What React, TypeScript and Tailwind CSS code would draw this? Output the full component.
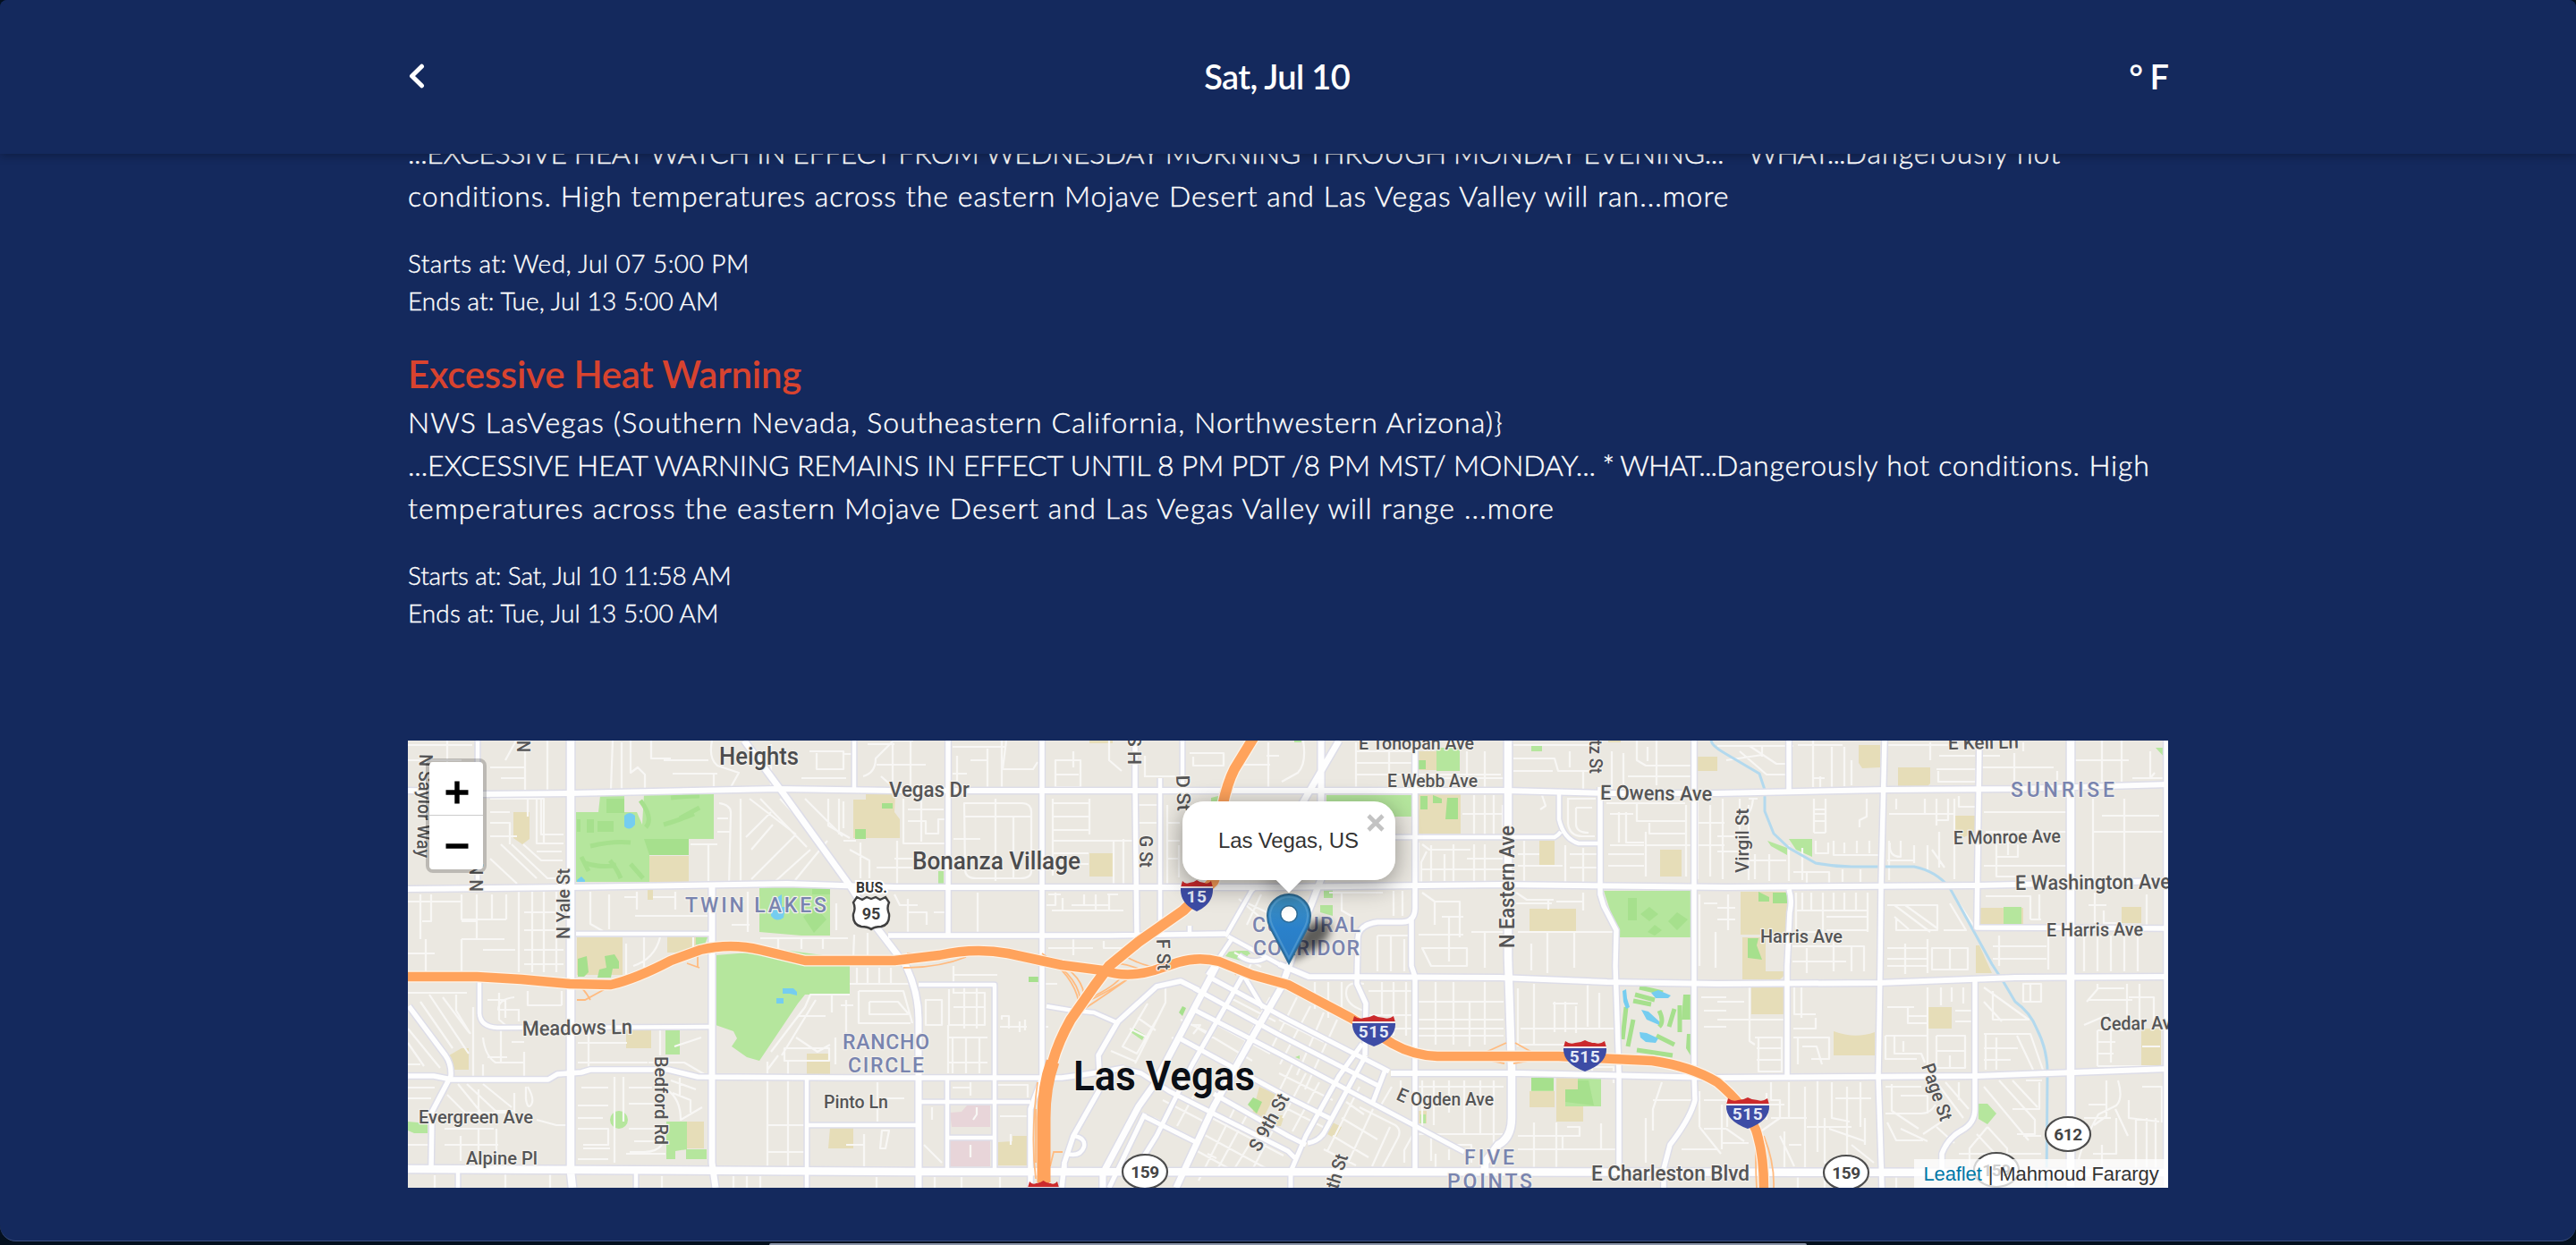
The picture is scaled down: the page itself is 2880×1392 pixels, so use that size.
import React from "react";

const TAN = [
  "M574 908h18v30l-8 6-10-7z",
  "M726 957h44v29h-44z",
  "M724 994h6v12h-6z",
  "M645 1048h51v42h-51z",
  "M746 1047h44l-4 18h-40z",
  "M700 1152h28v20h-28z",
  "M502 1180l14-8h8v24h-18z",
  "M902 1178h26v23h-26z",
  "M768 1254h19v30h-19z",
  "M928 1261h26v23h-28z",
  "M954 894h14v-6h33l-1 20 6 8v21h-52z",
  "M1218 954h26v26h-26z",
  "M1218 828h26v3h-26z",
  "M1116 1277l16-1v-6h16v33h-32z",
  "M1408 1215l18 8-14 28-12-6z",
  "M1428 1247h8l-4 12h-8z",
  "M1586 840h20v21h-20z",
  "M1586 888h47v44h-47z",
  "M1721 940h17v28h-17z",
  "M1710 1016h52v26h-52z",
  "M1856 950h24v30h-24z",
  "M1798 828h14v2h-14z",
  "M1898 846h22v16h-22z",
  "M1710 1220h28v18h-28z",
  "M1740 1205h30v49h-30z",
  "M1585 1242h10v14h-10z",
  "M1490 1255l10 5-7 13-9-5z",
  "M2078 833h24v25l-20 1-4-6z",
  "M2122 858h36v18l-4 4h-32z",
  "M2186 912h22v18l-12 6-10-6z",
  "M1946 997h52v48h-52z",
  "M1948 1048h26v38h26l-10 9h-42z",
  "M1958 1104h36v30h-36z",
  "M2050 1153q24 9 46 1v26h-46z",
  "M2156 1126h26v24h-26z",
  "M2214 1015h48v23h-48z",
  "M2372 1014h22v18h-22z",
  "M2209 1057l4 0 14 31h-18z",
  "M2394 1150h22v41h-22z",
];

const GREEN = [
  "M644 908h25l2-18h27v18l14 0 6 14 2-34h78v50h-28v18h-44v30h-82z",
  "M778 1048h13l-3 8h-10z",
  "M849 992h79v54h-32l-47-4z",
  "M800 1068l75-6 75 10v40h-50l-8 10-43 64-14-4-17-12 6-9-4-8-20-7z",
  "M744 1152h16v27h-16z",
  "M745 1254h23v31l-13 2v9h-10z",
  "M767 1285h23v11h-23z",
  "M456 1254l22 2v11h-15l-7-3z",
  "M1049 974h6v14h-6z",
  "M1354 892l8-2v10h-8z",
  "M1384 1063h12l2 4h-2l-6 8-20-6 4-5z",
  "M1483 889h95v24h-95z",
  "M1606 836h26v26h-26z",
  "M1712 832h12v8h-12z",
  "M1447 828h8v2h-8z",
  "M1480 994h10v10h-10z",
  "M1476 1012h14v12l-14-4z",
  "M1793 996h97v52h-80z",
  "M1264 1154l4-4 12 7-3 6z",
  "M1712 1205h25v15h-25z",
  "M1764 1205h26v32h-40v-18h14z",
  "M1976 940l22 8v8l-18-10z",
  "M2000 938h26v20l-18-8z",
  "M2410 836h11v12z",
  "M2240 1014h20v23h-20z",
  "M2212 1234h10l10 11-10 12-10-6z",
  "M1588 1246h6v10h-6z",
  "M1448 1182l5-2v4z",
  "M682 1252a10 10 0 1 0 20 0a10 10 0 1 0-20 0z",
];

const DARK_GREEN = [
  "M678 893h20v16h-20z",
  "M668 918h18v12h-18z",
  "M656 916h8v15h-8z",
  "M645 916h4v14h-4z",
  "M720 938h50v18h-44z",
  "M898 1025l14-11 12 14-14 15z",
  "M908 994h20v6h-20z",
  "M646 1072l10-3 2 18-5 5h-7z",
  "M676 1069l11-2 5 8v8h-7l-2 10h-15l2-9 8-2z",
  "M986 898h12v6h-12z",
  "M956 927h12v11h-12z",
  "M1150 1092h11v6h-11z",
  "M1318 1132l4-7 4 2-4 9z",
  "M1395 1235l6-8 10 5-6 13z",
  "M1586 850h8v10h-8z",
  "M1588 890h8v15h-8z",
  "M1602 889l10 4v5h-10z",
  "M1618 892h12v24h-14z",
  "M1820 1004h10v25h-10z",
  "M1844 1014l10 8-10 8-10-8z",
  "M1875 1020l12 8-12 12-10-10z",
  "M1850 1034l8 6-8 6-8-4z",
  "M1712 1205h25v14h-25z",
  "M1764 1208l12 0 6 28-32-4 0-14h14z",
  "M1966 997l12 6v5h-12z",
  "M1982 998h16v12h-16z",
  "M1954 1049h12l-2 8 6 16-16-2z",
  "M1882 1112h8v28h-10z",
  "M1886 1156h4v24l-5-8z",
];

const STROKED_GREEN =
  "M660 946q25-6 45-4M654 965q20 6 35 2M716 895q15 20 6 30M742 922q20-6 34-12M760 915l22-12M750 892q20-2 32-2M650 958q4 8 8 16M682 962q8 10 12 20M705 966l14 16M1833 1104l26 6M1828 1112l22 6M1826 1119l20 4M1818 1126l-4 36M1826 1140l-6 30M1855 1130q6 12 0 18M1872 1128l-6 20M1878 1124l0 30M1830 1174l40 6M1852 1158l20 10";

const WATER = [
  "M698 912q6-6 12 0v10q-6 8-12 2z",
  "M645 984l5-4 4 4v2h-9z",
  "M868 1004l6-4v14h4l-2 12q-8 6-14-2v-6l8-4z",
  "M875 1105h12l4 4v4l-8-2h-8z",
  "M868 1116h8v6h-8z",
  "M1814 1108l4-2 1 10 3 10-4 2-3-8z",
  "M1846 1110l8-3 14 6-3 3h-14z",
  "M1835 1129l8 2 12 11v4l-14-6z",
  "M1833 1154l8 1 13 6-3 5-11-1-6-5z",
];

const PINK = [
  "M1062 1244l13-1 6-7h26v24h-43z",
  "M1062 1275h45v29h-46z",
];

const MINOR = [
  // northwest
  "M456 833h72M456 850h60M500 828v55M548 858h40M565 850l12-22M587 828v55M612 828v55M560 870h28M685 828l-2 54M695 830v52M705 828v36l8-6 8 8v16M742 850h50M796 828q-4 20 6 28l24 8-10 18M728 828v20h22M752 865h50M798 865v16M862 832v48M905 840h38v20h-30v-18M896 870h50",
  "M548 893h60v50h22M590 893v20M600 893v50h30M605 893v40h25M548 908h22M548 920h22v24M560 944l40 38M572 944l40 38h14M585 944l20 18h24M548 960l30 28M600 952h28M548 935h30",
  "M804 898q14 2 13 12l-2 80M802 944h-30M792 944v44M802 915h12M802 930h14M828 893v94M838 893l52 40M850 893l52 54M872 893l34 36M890 933l-50 50M906 950l-40 36M925 940l-36 44M862 908l-28 28M926 893v30l24 14M840 950l24-28M938 893v40M900 893l42 42",
  "M660 997v36l14 8M681 1000v39M712 997v20M698 1003h14M755 997v20M730 1003h24M710 1024h84M836 997v45M820 1008h12M818 1034h20M700 1055v36M720 1048v42M738 1048q-6 24-30 32M775 1048v14M850 1049h98M870 1049v12M896 1049v12M920 1049v12M935 1010v30",
  "M456 1008h60M470 1000v50M482 1000v30h-10M516 1000v28h50M533 1000v50M550 1000v28M566 1000v28M580 997v90M595 997v90M608 997v90M622 997v90M586 1020h44M586 1040h44M586 1062h44M586 1078h44M516 1030h18M516 1050h48M476 1050v38M516 1050v38M456 1066h30M540 1062h36",
  // west of the river bend
  "M456 1110h66M480 1112l44 66M470 1120l36 52M495 1115l30 40M510 1112v18l16 26M529 1126v78M456 1150l36 44M456 1166l18 26M470 1190h-14M545 1118h20v20M558 1110v30l14 12M575 1115q-18 2-18 14h24M580 1130v12M540 1160q2 20 14 28h18M560 1152v36M572 1165h14M545 1182h22M586 1176v30M560 1188h26M540 1190v14M590 1108v16h38M628 1108v16",
  "M456 1216h30M456 1228h26M512 1212l26 32M522 1212l32 30h22M540 1212l32 26M500 1224l20 20h50M535 1218v34M575 1222v22M590 1215q8 14 4 20t-6-6v-14M497 1262h55M497 1280h60M535 1262v36M555 1262v30M515 1270v28M456 1280h24M600 1252l22 6h12M486 1314v14M565 1312v16M615 1312v16",
  "M658 1152v48M646 1166h55M646 1188h78M738 1152v28M725 1188h40l24 14M687 1204v96M697 1204v50M650 1216h30M646 1236h34M646 1250h28M646 1262h34v18h-28M652 1284h30M646 1296h34M703 1216h26M703 1234h28M703 1262h36v14h-30M740 1280q-6 8-20 8h-16M750 1208l28 10M752 1222l20 8v14M760 1205v20M745 1218q16 10 16 34l24-14M784 1160l-30 10M700 1290h44M820 1315v13M835 1315v13M850 1315v13M740 1315v13",
  "M950 1112h-44l-6 14-38 50M912 1118l-38 62M930 1112v20M893 1136h30M877 1172h50v14h-50zM858 1187v120M881 1187v120M858 1258h46M858 1288h44M890 1160l24 16 14-8M934 1160v30M870 1180l-12 16v50",
  // mid-north
  "M943 843h12M965 868q14-4 14-20l20-20h22M980 855h55M970 832h30M998 832v48M1018 828v50M985 868l16 14M1065 835h60M1070 845v36h34v-44M1085 850h18M1120 828v52M1065 865h16M1125 828l-4 32 34 0 5-8M1180 850h28v30h-28zM1180 866h26M1240 828v22l14 12M1200 840v18M1330 842h38v14h-34v-10M1418 830v52M1420 855h-40M1430 845h-14M1280 868h34M1280 845v24",
  "M1010 893v50h48M1030 893v48M1015 905h40M1015 918h20v14h14v-16h10M943 940h14M950 950l22 12v20M962 942v40M1003 940v52M1000 960h52M980 970h40M943 896v30M1078 898h64q12 0 11 12v64q0 8-12 8h-50q-12 0-12-10zM1078 913h74M1113 893v92M1066 938h30M1133 913v70M1177 893v86M1218 893v40M1177 898h40M1177 913h40M1177 928h40M1177 940h92M1177 954h40M1177 966h40M1245 940v50M1256 938v54M1273 900h22M1273 920h20M1305 900v90M1318 945v36M1305 920h14M1305 940h14M1305 960h14",
  "M955 1045l-1 26M970 1043v26M1015 1005v40h40M1016 1020h20v14M1000 1000l6 12h20M1093 998v44M1060 1020h-16M1180 998v14h-10M1188 1004v14M1176 1018h80M1212 1000v12h-14M1225 1000v18M1240 1000v18M1212 1012h28M1250 1000h-12M1172 1060h50M1200 1050v18M1234 1052v8h34M1172 1000h14",
  "M958 1082v18M970 1082v18M983 1082v18M996 1082v18M950 1100h66M960 1108v36h58M960 1108h50l10 36M972 1120h32l12 14M972 1120v14h44M940 1124h14M946 1118v36M1035 1118h18v28h-18zM1066 1080v30M1065 1090h50M1065 1110h36v36h-40v-40M1078 1104v46M1092 1104v46M1066 1126h36M1060 1146v54M1060 1160h44M1065 1160v40M1080 1160v40M1095 1160v40M1060 1188h44M1118 1148h30M1120 1140v-4h8v14M1140 1142v12M1146 1140v12M1160 1100h22M1172 1148h-8",
  "M981 1210v44M981 1228h30M966 1268v40M946 1280h20M986 1264h8l-4 20h-6zM1033 1280l20 20M1042 1238v14M1085 1210v15M1065 1216h20M1115 1213h34v14M1092 1238v8l-4 6M1085 1280v14M1118 1248h30M1130 1268v12M980 1316v12M1045 1316v12M1075 1316v12M1118 1316v12",
  // downtown
  "M1303 1105v16l-34 68M1283 1122l-28 48 16 8 22-38M1272 1138l20 14M1263 1150l20 10M1242 1175l28 12M1320 1140l30 14M1310 1160l30 14M1334 1146h8l-8 10M1370 1100l26 16M1376 1116l50 26M1350 1140l70 38M1340 1150l60 36M1330 1170l80 42M1384 1105l-50 90M1420 1115l-50 90M1300 1230l50 26M1290 1250l50 26M1340 1215l-24 44M1350 1290l10 5M1380 1240l-40 80M1395 1245l-38 70M1412 1255l-34 55M1425 1260l-26 50M1355 1250l80 42M1345 1268l70 38M1335 1285l40 22M1430 1140l50 25M1450 1115l-30 60M1465 1125l-34 65M1480 1132l-30 70M1495 1140l-36 78M1430 1200l60 30M1430 1235l55 28M1445 1190l-20 40M1460 1200l-26 50M1475 1210l-30 55M1520 1215l-36 72M1535 1240l-28 60M1500 1250l40 24M1490 1270l40 24M1480 1285l36 18M1520 1238l40 20q8 6 2 16l-18 34M1505 1232l20 14M1554 1260l-20 44M1570 1300v-14l10-18",
  "M1385 1005l30 26M1410 1000l-16 34M1395 1010l34 16M1380 1065l30 16M1400 1075l-10 20",
  // mid-east
  "M1457 828q4 26-6 36l-18 10M1516 830v50M1516 853h62M1516 866h62M1553 840v40M1516 840h64M1516 880v-50M1607 870h75M1640 840v42M1660 840v42M1586 866h92M1692 833h90M1692 848h46l4 14h34M1692 862h44M1755 840v18M1802 840v42M1815 842v40M1830 828v22l10 6h50M1842 835v16M1852 828v50M1820 868h70M1770 862v20",
  "M1648 889v44M1660 889v44M1635 910h46M1670 889v44M1586 942v44M1590 944l8 6h46M1595 952l-6 12v22M1600 945v40M1590 972h92M1625 944v42M1615 955v30M1648 944v42M1640 960h40M1660 944v42M1680 900v30M1724 889l4 12-6 4M1753 893v28q2 14 16 14h14M1762 903v18q0 10 14 10M1762 903h18M1752 893h32M1796 898h88M1800 910h26M1810 908v34M1818 908v34h20M1830 898v20h56M1844 920v12h40M1840 930v50M1800 945h38M1798 955h40M1798 968h40M1840 945h50M1885 900v80M1704 940v46M1697 955h24M1697 968h50M1750 945v42M1770 948v38M1755 955h30M1755 970h30M1898 893v90M1912 900v80M1898 920h30M1898 945h30",
  "M1500 998v20l14 8M1486 998h60M1558 996v28M1568 996v28M1590 998l14 10v26M1602 1008h30v40M1612 1025h24M1620 1025v50M1586 1045h50M1540 1046h34M1540 1046v40M1555 1046v40M1570 1050v36M1590 1060h50v20h-40zM1660 1042v40M1645 1042h36M1695 998l12 8h30M1695 1010h40M1731 1005v12M1770 998v20M1697 1042h110M1730 1042v46M1760 1042v40M1712 1055v30M1740 1008h30M1900 1000v80M1905 1010h15M1918 1042v40M1525 1100q-20-4-20 10t20 20",
  "M1470 1098v30M1485 1098v40M1500 1098v40M1545 1098v36M1558 1098v60M1572 1098v60M1530 1108h48M1530 1135h48M1540 1150h40M1585 1120h96M1585 1140h96M1585 1150h96M1585 1158h96M1605 1098v70M1625 1098v70M1643 1120v50M1660 1098v70M1697 1105v65M1715 1100v68M1697 1168h60M1700 1150h108M1738 1120v34M1750 1120v34M1762 1125v30M1736 1122h28M1775 1098v50M1788 1110v40M1905 1130h25M1905 1148h25M1902 1115h28",
  "M1590 1208v60M1603 1208v50M1620 1208v36M1637 1208v60M1655 1208v60M1670 1208v100M1586 1215h95M1586 1268h94M1600 1268v30M1615 1280h30v20M1620 1285v12M1697 1270h50v14M1697 1285h110M1715 1255v52M1740 1255v50M1752 1260h14v10h-18M1790 1256v30M1858 1210l-10 30v24M1848 1230h45M1900 1220v40M1905 1230h26v30M1880 1285h40M1900 1260l24 30M1840 1250v50M1566 1208v20M1556 1215l-14 24 M1780 1205v-12h24v18M1605 1290v18",
  // northeast
  "M1920 834h85M1930 850l40-6M1945 840l30 26h24M1956 834l30 20h12M1970 834v12M2027 828v52M2048 835v45M2062 835v44M2010 833h50M2028 870h12M2035 868v12M2070 850v28M2110 833h80M2165 860h44v14h-42v-12M2168 845h40M2158 830v20M2216 845h20M2216 858h80M2252 842v40M2262 830v10M2320 850h60M2350 828v50M2372 828v50M2404 840v30l5-6M2384 870h38M2300 862v10M2190 890v12h18",
  "M1926 893v90M1945 893v60M1920 935h26M1955 893h10M1955 900v84M1960 893q-2 16-8 18M1920 952h36M1962 955v28M1978 955v30M1955 962h42M2028 893v38M2041 893v38M2028 905h13M2028 918h13M2028 931h13M2087 893v20l-8 4v8M2028 910h13M2112 910h72M2120 905v-12M2152 893v16M2165 893v30M2178 893v24h-14M2185 893v90M2000 945v40M2015 948v36M2030 940v14h14v-12M2050 940v16h50M2062 942v12M2076 940v14M2090 940v14M2112 940v44M2125 940v18q-14 0-12-16M2140 945v20M2155 945v30M2168 930v40M2110 962h30M2160 950l14 20M2218 908h95M2220 930h90M2232 940v40h34M2232 958h24v-14M2245 932v24M2218 968h95M2340 893v95M2340 930h80M2375 893v95M2350 912h64M2218 880h90M2005 975h40v14M2060 972v14M2080 972v14M2020 975v14",
  "M2008 998v44h30M2015 998v20M2025 998v20M2038 998v50M2050 998v20M2062 998v20M2075 998v20M2088 998v44M2008 1018h80M2042 1025h46M2042 1040h46M2110 1012h56v28h-46v-14M2118 1012l40 30M2130 1012l36 26M2118 1025l16 14M2180 1010l18 30h-25M2190 1010l20 30M2220 1002h50v26M2280 1000v28M2270 1028h12M2110 1060h45v20h-45M2130 1055v34M2155 1050v38M2160 1060h40v24h-40zM2180 1060v24M2110 1072h44M2235 1046v34M2228 1058h60M2228 1072h60M2290 1046v38M2330 1046v40M2345 1046v40M2360 1046v40M2375 1046v40M2390 1046v40M2342 998v34M2352 1018v14h16M2335 1012h20M2400 1000v34M2004 1058h80v28M2020 1060v28M2050 1046v40M2070 1058v28M2004 1075h60M1932 1000v40M1920 1015h20M1920 1028h20",
  "M1920 1120h30M1920 1140h75M1956 1104v60l6 4M1962 1160h30v38h-26v-38M1964 1172h28M1964 1185h28M2006 1104v30h24M2014 1104v34M2005 1160h40v24h-20M2010 1160v30M2015 1170h16l6 20M2030 1138v12h-25M2110 1126h30M2133 1126v18h22M2133 1136h22M2155 1104v90M2170 1104v20M2182 1104v16M2195 1104v18M2186 1130h20M2186 1142h20M2108 1158v26h35M2118 1158v20h30l4 10M2108 1158h48M2128 1164v12M2165 1158h32v36h-32v-36M2165 1175h32M2180 1180v14M2218 1104l50 36h-40v-32M2218 1120l20 22M2218 1156h52l14 40M2220 1156v40M2232 1160v36M2218 1172h38M2255 1158l18 38M2218 1185h30M2262 1100h20v20h-20zM2270 1100v20",
  "M2334 1118h50M2345 1105h30M2378 1100v36M2392 1100v50M2380 1115h28v30M2345 1100v6l-12 14M2345 1152v40M2345 1152h35M2360 1152v36M2345 1165h20M2345 1178h18M2345 1192h70M2395 1170h20M2330 1146l28-12M2108 1215h40M2115 1212v30l30 20M2125 1225h30v20M2165 1210l30 40M2175 1210l26 30M2190 1210v20M2108 1245h40q10 0 16-10M2110 1255l10 20h30M2125 1262l30 14M2165 1260l20 18M2150 1268l24-16M2218 1215l50 60M2235 1208l40 44v16h-20M2250 1208l28 30M2222 1260l-20 24v22M2222 1260l22 24v16M2190 1290h80M2210 1268l30 32M2262 1270h20M2262 1290h20M2280 1210v30h-30M2265 1208h18M2355 1208v40l-14 10M2368 1208q6 20-2 28l-20 10-16 30-6 20M2395 1215h22v40M2380 1230v20l34 4M2330 1250h30M2340 1290h26v-40M2388 1250v56M2400 1250v56M2410 1250v56M2350 1280v26M2365 1240l14 30M2335 1235h20",
  "M1980 1210v20h10v20l-20 14M2000 1210v40M2018 1215v90M2032 1208v80M2048 1210v40l20 4M2065 1215v90M1980 1250h40M1975 1235h20M1995 1265v40M2040 1250v50h20M2080 1210v50M2052 1228h40M2045 1262l40 14M2000 1280h14M1990 1270l16 34M2070 1280l25 20M2020 1260h50M2085 1250v30M2010 1315v13M2040 1315v13M2120 1315v13M1975 1222v30M1925 1235v50M1905 1262h25M1925 1278h30M1930 1262l20 14",
];

type Road = { d: string; w: number };

const ROADS: Road[] = [
  { w: 4.5, d: "M534 828V992M536 1090V1133Q537 1148 556 1149L796 1148M512 1310V1328M711 1310V1328M902 1205V1328M902 1258H1027M955 828V884M1322 828V884M1297 870V1044M1059 1205V1310M1060 1272H1112M1232 1310V1328M1030 1232H1152M1027 1101H1112V1310M644 1044H796" },
  { w: 4.5, d: "M1170 1125L1200 1130 1223 1132 1248 1143M1200 1270q14 2 12 12-4 12-20 8M1330 1035V1046M1370 1047L1398 998Q1402 990 1412 992M1373 1047L1430 1078 1463 1092M1377 1050L1350 1090M1417 1070Q1400 1080 1385 1068M1390 1090L1412 1127M1560 936H1738Q1742 934 1745 930M1743 886V916Q1748 938 1765 943H1790" },
  { w: 5, d: "M1353 1093L1440 1140 1553 1198M1335 1105L1430 1157 1543 1215M1337 1130L1430 1178 1637 1288M1317 1160L1440 1227 1490 1252M1257 1195L1276 1200 1307 1220 1440 1287 1450 1297M1357 1223L1440 1270 1460 1280M1277 1247L1337 1277M1390 1090L1333 1190 1293 1270 1262 1320M1240 1328L1280 1245M1523 1167L1497 1203 1460 1270 1443 1310V1328M1527 1180L1507 1217 1480 1267Q1474 1276 1462 1278M1548 1198L1535 1232" },
  { w: 5.5, d: "M457 1125L498 1180Q505 1190 504 1203L483 1243 482 1306M456 1203H485L505 1207H613L623 1201 650 1199 660 1196H747L780 1204 950 1205H1187Q1225 1200 1257 1194M1190 1306V1300L1200 1270 1230 1217 1228 1180 1250 1142 1293 1103 1320 1097 1340 1107M1187 1328L1190 1300" },
  { w: 5.5, d: "M1060 828V1044M1165 828V1068M1165 1080V1205L1152 1240V1328M1269 828V880L1271 1044M993 1046H1240L1370 1044M1582 836V1015Q1582 1031 1567 1031H1540Q1518 1034 1518 1050L1517 1100 1527 1122 1526 1180M1578 1025V1080L1582 1092V1310M1789 880V1000L1793 1013 1807 1040 1806 1080 1810 1200V1310" },
  { w: 6, d: "M456 884L500 885 540 888 638 887 870 882 1000 884H1685L1800 887H1920L2107 883 2253 882 2424 877M456 994L638 992 880 988 1000 992H1170L1430 992 1680 989 1930 992 2210 990 2424 985M1430 1078L1463 1092 1677 1093 1797 1098 1920 1100 2100 1099 2253 1093 2424 1092M1555 1200H1700L1920 1205 2210 1203 2424 1195" },
  { w: 5.5, d: "M1894 828V1200L1895 1230Q1890 1250 1867 1280L1860 1307V1328M2000 828V885M2213 828L2210 1037 2424 1038M2208 1097V1240Q2208 1256 2193 1264T2171 1290V1310M2000 994Q2004 1006 2001 1020L1998 1080V1202M2422 828V1328M2107 828L2103 993 2102 1080 2100 1203 2104 1328" },
  { w: 7, d: "M1360 1080L1290 1213 1273 1237 1233 1312V1328M1433 1103L1400 1160 1357 1237 1315 1328M1497 828L1480 857 1455 900M1477 828V896M1478 980L1460 1027 1433 1103M796 988V1300L800 1328M832 828L872 882 950 990 980 1037 1013 1080Q1027 1110 1027 1140V1328" },
  { w: 8.5, d: "M638 828V1310L640 1328M456 1307L1027 1310 2424 1311M1686 828V1070L1690 1193V1250Q1690 1272 1675 1280L1660 1300V1310M2315 828V1328" },
];

const FREEWAYS = [
  "M456 1092H533L583 1095 637 1100 683 1101Q712 1094 750 1074L783 1062Q817 1054 850 1062L900 1074H1000L1050 1068Q1090 1059 1127 1066L1187 1079 1233 1085Q1260 1094 1290 1085L1317 1076Q1340 1069 1363 1075L1400 1090 1440 1101 1510 1138 1557 1167Q1580 1180 1607 1181H1743L1847 1186Q1890 1192 1920 1210 1950 1235 1963 1263 1972 1290 1972 1328",
  "M1402 824L1380 860Q1372 876 1367 900 1370 950 1357 985L1323 1018 1273 1053 1240 1080 1223 1103 1197 1140Q1183 1165 1177 1187 1167 1215 1167 1250V1328",
];

const RAMPS =
  "M1010 1082Q1050 1082 1080 1070M1014 1066L1050 1066M1165 1066Q1200 1090 1206 1120M1170 1070Q1212 1096 1208 1130M1178 1074Q1216 1092 1212 1124M1215 1120Q1240 1108 1262 1094M1218 1116Q1245 1104 1256 1090M1212 1128Q1240 1110 1270 1088M1244 1078Q1256 1076 1275 1084M1256 1068Q1280 1082 1300 1082M1158 1240L1158 1300M1160 1210Q1152 1270 1158 1318M1188 1288H1178L1174 1304M645 1118H654L676 1106M660 1118Q652 1104 648 1104M768 1077L782 1082M780 1064V1082M1662 1176L1684 1166M1694 1166L1712 1176M1668 1186L1682 1189M1692 1189L1708 1186M1432 1104L1450 1110M1376 1080L1382 1090M1964 1262Q1962 1300 1964 1328M1972 1270Q1984 1300 1983 1328";

type Label = {
  t: string;
  x: number;
  y: number;
  w: number;
  s?: number;
  r?: number;
  kind?: "street" | "area" | "city" | "town";
};

const LABELS: Label[] = [
  { t: "Heights", x: 804, y: 855, w: 89, s: 27, kind: "town" },
  { t: "Bonanza Village", x: 1020, y: 972, w: 188, s: 27, kind: "town" },
  { t: "Las Vegas", x: 1200, y: 1219, w: 203, s: 46, kind: "city" },
  { t: "N Saylor Way", x: 469, y: 843, w: 116, r: 91.5 },
  { t: "N", x: 593, y: 841, w: 13, r: -90 },
  { t: "N N", x: 540, y: 997, w: 32, r: -90 },
  { t: "N Yale St", x: 637, y: 1050, w: 79, r: -90 },
  { t: "Vegas Dr", x: 994, y: 891, w: 90, s: 23 },
  { t: "Meadows Ln", x: 584, y: 1158, w: 123, s: 23, r: -1 },
  { t: "Bedford Rd", x: 732, y: 1181, w: 99, r: 90 },
  { t: "Evergreen Ave", x: 468, y: 1256, w: 128 },
  { t: "Alpine Pl", x: 521, y: 1302, w: 80 },
  { t: "Pinto Ln", x: 921, y: 1239, w: 72 },
  { t: "TWIN LAKES", x: 766, y: 1020, w: 158, kind: "area" },
  { t: "RANCHO", x: 942, y: 1173, w: 97, kind: "area" },
  { t: "CIRCLE", x: 948, y: 1199, w: 85, kind: "area" },
  { t: "CULTURAL", x: 1400, y: 1042, w: 121, kind: "area" },
  { t: "CORRIDOR", x: 1401, y: 1068, w: 119, kind: "area" },
  { t: "FIVE", x: 1637, y: 1302, w: 56, kind: "area" },
  { t: "POINTS", x: 1618, y: 1329, w: 95, kind: "area" },
  { t: "SUNRISE", x: 2248, y: 891, w: 116, kind: "area" },
  { t: "S H", x: 1261, y: 822, w: 33, r: 90 },
  { t: "D St", x: 1315, y: 867, w: 40, r: 88 },
  { t: "G St", x: 1274, y: 934, w: 36, r: 90 },
  { t: "F St", x: 1293, y: 1050, w: 35, r: 88 },
  { t: "S 9th St", x: 1408, y: 1289, w: 70, r: -61 },
  { t: "S 4th St", x: 1488, y: 1356, w: 66, r: -73 },
  { t: "E Tonopah Ave", x: 1519, y: 838, w: 129 },
  { t: "E Webb Ave", x: 1551, y: 880, w: 101 },
  { t: "E Owens Ave", x: 1789, y: 894, w: 125, s: 23, r: 0.6 },
  { t: "Betz St", x: 1777, y: 806, w: 59, r: 90 },
  { t: "N Eastern Ave", x: 1693, y: 1060, w: 137, s: 24, r: -90 },
  { t: "E", x: 1560, y: 1229, w: 11, r: 24 },
  { t: "Ogden Ave", x: 1577, y: 1236, w: 93 },
  { t: "E Charleston Blvd", x: 1779, y: 1320, w: 177, s: 23 },
  { t: "E Kell Ln", x: 2178, y: 838, w: 79, r: -1 },
  { t: "E Monroe Ave", x: 2184, y: 944, w: 120, r: -1 },
  { t: "Virgil St", x: 1955, y: 976, w: 72, r: -90 },
  { t: "E Washington Ave", x: 2253, y: 995, w: 174, s: 23, r: -0.5 },
  { t: "E Harris Ave", x: 2288, y: 1047, w: 108, r: -0.5 },
  { t: "Harris Ave", x: 1968, y: 1054, w: 92 },
  { t: "Cedar Ave", x: 2348, y: 1152, w: 90, r: -1 },
  { t: "Page St", x: 2148, y: 1192, w: 66, r: 71 },
];

const LABEL_STYLE = {
  street: { fill: "#555556", size: 21, weight: 500 },
  town: { fill: "#4c4c4e", size: 27, weight: 500 },
  city: { fill: "#0b0f16", size: 46, weight: 600 },
  area: { fill: "#7984af", size: 23, weight: 500 },
};

function MapLabel({ t, x, y, w, s, r = 0, kind = "street" }: Label) {
  const st = LABEL_STYLE[kind];
  return (
    <text
      x={x}
      y={y}
      textLength={w}
      lengthAdjust={kind === "area" ? "spacing" : "spacingAndGlyphs"}
      transform={r ? `rotate(${r} ${x} ${y})` : undefined}
      fontSize={s ?? st.size}
      fontWeight={st.weight}
      fill={st.fill}
      stroke="#f3f1ec"
      strokeWidth={2.5}
      strokeLinejoin="round"
      paintOrder="stroke"
    >
      {t}
    </text>
  );
}

function Interstate({ x, y, w, n }: { x: number; y: number; w: number; n?: string }) {
  const h = 36;
  return (
    <g transform={`translate(${x} ${y})`}>
      <path
        d={`M2 1Q${w * 0.15} 5 ${w * 0.27} 3Q${w * 0.4} 3 ${w / 2} 0Q${w * 0.6} 3 ${w * 0.73} 3Q${w * 0.85} 5 ${w - 2} 1L${w} 8H0z`}
        fill="#cb2a2c"
      />
      <path d={`M0 7H${w}V9H0z`} fill="#f1e7ea" />
      <path d={`M0 9H${w}Q${w + 1} 26 ${w / 2} ${h - 1}Q-1 26 0 9z`} fill="#3d4ca5" />
      {n && (
        <text x={w / 2} y={25} textAnchor="middle" fontSize={19} fontWeight={700} letterSpacing={0.6} fill="#e6ebf7">
          {n}
        </text>
      )}
    </g>
  );
}

function StateRoute({ x, y, n }: { x: number; y: number; n: string }) {
  return (
    <g>
      <ellipse cx={x} cy={y} rx={25} ry={19} fill="#fff" stroke="#4d4d4d" strokeWidth={2.2} />
      <text x={x} y={y + 7} textAnchor="middle" fontSize={19} fontWeight={700} fill="#444" letterSpacing={-0.4}>
        {n}
      </text>
    </g>
  );
}

function MapCanvas() {
  return (
    <svg viewBox="456 828 1968 500" className="block h-full w-full" fontFamily="Roboto, 'Liberation Sans', sans-serif">
      <rect x={456} y={828} width={1968} height={500} fill="#ebe8e1" />
      <path d={TAN.join("")} fill="#e6ddb8" />
      <path d={GREEN.join("")} fill="#b5e69d" />
      <path d={DARK_GREEN.join("")} fill="#a6e08d" />
      <path d={STROKED_GREEN} fill="none" stroke="#a6e08d" strokeWidth={5} />
      <path d={PINK.join("")} fill="#e8d5d9" />
      <path d={WATER.join("")} fill="#75cdf0" />
      <path d={MINOR.join("")} fill="none" stroke="#f8f7f5" strokeWidth={2.2} strokeLinejoin="round" />
      <path
        d="M1913 828Q1914 834 1928 842L1967 865 1973 883V907L1983 932 2000 948 2030 965Q2050 969 2070 969H2140Q2165 974 2180 993L2227 1078 2240 1098 2253 1120Q2270 1132 2277 1150 2290 1175 2289 1203L2288 1328"
        fill="none"
        stroke="#b3d9ee"
        strokeWidth={3}
      />
      {ROADS.map((r, i) => (
        <path key={`c${i}`} d={r.d} fill="none" stroke="#dddde8" strokeWidth={r.w + 3} strokeLinejoin="round" />
      ))}
      {ROADS.map((r, i) => (
        <path key={`r${i}`} d={r.d} fill="none" stroke="#fefefe" strokeWidth={r.w} strokeLinejoin="round" />
      ))}
      <path d={RAMPS} fill="none" stroke="#ffbb80" strokeWidth={1.8} />
      {FREEWAYS.map((d, i) => (
        <path key={`fc${i}`} d={d} fill="none" stroke="#fdf3e8" strokeWidth={i ? 14 : 13} strokeLinejoin="round" />
      ))}
      {FREEWAYS.map((d, i) => (
        <path key={`f${i}`} d={d} fill="none" stroke="#ffa35c" strokeWidth={i ? 11.5 : 10.5} strokeLinejoin="round" />
      ))}
      <path d="M1177 1187Q1167 1215 1167 1250V1322" fill="none" stroke="#ffa35c" strokeWidth={15} />

      {LABELS.map((l) => (
        <MapLabel key={`${l.t}${l.x}`} {...l} />
      ))}

      <text x={957} y={998} fontSize={16} fontWeight={700} fill="#333" stroke="#fff" strokeWidth={4} paintOrder="stroke" textLength={35}>
        BUS.
      </text>
      <path
        d="M958 1003l6 3 5-3 5 2 5-2 5 3 6-3 4 6q-3 6 0 13 1 12-9 14-7 0-11 3-4-3-11-3-10-2-9-14 3-7 0-13z"
        fill="#fff"
        stroke="#3f3f3f"
        strokeWidth={2.4}
      />
      <text x={974} y={1028} textAnchor="middle" fontSize={18} fontWeight={700} fill="#3c3c3c">
        95
      </text>
      <Interstate x={1320} y={984} w={36} n="15" />
      <Interstate x={1512} y={1135} w={48} n="515" />
      <Interstate x={1748} y={1163} w={48} n="515" />
      <Interstate x={1930} y={1227} w={48} n="515" />
      <Interstate x={1149} y={1320} w={35} />
      <StateRoute x={1280} y={1310} n="159" />
      <StateRoute x={2064} y={1311} n="159" />
      <StateRoute x={2232} y={1308} n="159" />
      <StateRoute x={2312} y={1268} n="612" />
    </svg>
  );
}

function Marker() {
  return (
    <svg width={110} height={90} viewBox="0 0 110 90" className="absolute top-[169px] left-[956px]">
      <defs>
        <linearGradient id="pin" x1="0" y1="0" x2="0" y2="1">
          <stop offset="0" stopColor="#4090bd" />
          <stop offset="0.5" stopColor="#2a81cb" />
          <stop offset="1" stopColor="#2a7ac0" />
        </linearGradient>
        <filter id="pinShadow" x="-40%" y="-40%" width="180%" height="180%">
          <feGaussianBlur stdDeviation="5" />
        </filter>
      </defs>
      <path d="M30 79L42 48Q56 26 74 34 80 46 62 62z" fill="#000" opacity={0.6} filter="url(#pinShadow)" />
      <path d="M29 80L8 40Q5 34 5 27A24 24 0 0 1 53 27Q53 34 50 40z" fill="url(#pin)" stroke="#2e6c97" strokeWidth={2} />
      <path d="M29 74L11 39Q8 33 8 27A21 21 0 0 1 50 27Q50 33 47 39z" fill="none" stroke="#5fa3d2" strokeWidth={2} opacity={0.6} />
      <circle cx={29} cy={25} r={10} fill="#2e6c97" />
      <circle cx={29} cy={25} r={8.5} fill="#fff" />
    </svg>
  );
}

function Popup() {
  return (
    <div className="absolute top-[68px] left-[866px] h-[88px] w-[238px]">
      <div className="h-full w-full rounded-3xl shadow-[0_6px_28px_rgba(0,0,0,0.4)]" />
      <div className="absolute top-[66px] left-[104px] size-[30px] rotate-45 bg-white shadow-[0_6px_28px_rgba(0,0,0,0.4)]" />
      <div className="absolute inset-0 flex items-center rounded-3xl bg-white pl-[40px] font-['Liberation_Sans',sans-serif] text-[24px] tracking-[-0.15px] whitespace-nowrap text-[#333]">
        Las Vegas, US
      </div>
      <svg width={20} height={20} viewBox="0 0 20 20" className="absolute top-[14px] right-[12px]">
        <path d="M2 2L18 18M18 2L2 18" stroke="#c3c3c3" strokeWidth={4.6} />
      </svg>
    </div>
  );
}

function ZoomControl() {
  return (
    <div className="absolute top-[20px] left-[20px] flex h-[128px] w-[68px] flex-col overflow-hidden rounded-lg border-4 border-black/20 bg-clip-padding">
      <button className="flex h-[60px] items-center justify-center rounded-t-[4px] border-b border-[#ccc] bg-white">
        <svg width={26} height={26} viewBox="0 0 26 26" className="mt-[8px] ml-[2px]">
          <path d="M13 0.5V25.5M0.5 13H25.5" stroke="#000" strokeWidth={5.4} />
        </svg>
      </button>
      <button className="flex h-[60px] items-center justify-center rounded-b-[4px] bg-white">
        <svg width={26} height={26} viewBox="0 0 26 26" className="mt-[8px] ml-[2px]">
          <path d="M0.5 13H25.5" stroke="#000" strokeWidth={5.4} />
        </svg>
      </button>
    </div>
  );
}

function Header() {
  return (
    <header className="relative z-10 h-[172px] bg-[#14295d] shadow-[0_2px_10px_rgba(0,0,0,0.3)]">
      <div className="mx-auto flex h-full w-[1968px] items-center justify-between pb-[2px] text-[38px] font-semibold text-white">
        <svg width={19} height={28} viewBox="0 0 19 28">
          <path d="M15.5 3.2L4.5 14L15.5 24.8" fill="none" stroke="#fff" strokeWidth={5} strokeLinecap="round" strokeLinejoin="round" />
        </svg>
        <h1 className="tracking-[-0.65px] whitespace-nowrap">Sat, Jul 10</h1>
        <span className="tracking-[-1px] whitespace-nowrap">° F</span>
      </div>
    </header>
  );
}

export default function App() {
  return (
    <div className="relative h-[1392px] w-[2880px] overflow-hidden bg-[#04101f] font-['Lato',sans-serif]">
      <div className="h-[1388px] overflow-hidden rounded-t-lg rounded-b-[18px] border-b border-[#3d4f7c] bg-[#14295d]">
        <Header />
        <main className="mx-auto mt-[-25px] w-[1968px] text-[32px] leading-[48px] font-light whitespace-nowrap text-white">
          <section className="[-webkit-text-stroke:0.4px_white]">
            <p>
              <span className="block tracking-[1px]">
                <span className="tracking-[-0.39px]">
                  ...EXCESSIVE HEAT WATCH IN EFFECT FROM WEDNESDAY MORNING THROUGH MONDAY EVENING...
                </span>
                <span className="tracking-[-0.85px]"> * WHAT...</span>Dangerously hot
              </span>
              <span className="block tracking-[1.03px]">
                conditions. High temperatures across the eastern Mojave Desert and Las Vegas Valley will ran...more
              </span>
            </p>
            <div className="mt-[30px] text-[28px] leading-[42px]">
              <p className="tracking-[0.45px]">Starts at: Wed, Jul 07 5:00 PM</p>
              <p className="tracking-[0.1px]">Ends at: Tue, Jul 13 5:00 AM</p>
            </div>
          </section>
          <section className="mt-[36px]">
            <h2 className="text-[42px] leading-[50px] font-semibold tracking-[-0.25px] text-[#d8432f]">Excessive Heat Warning</h2>
            <div className="[-webkit-text-stroke:0.4px_white]">
              <p className="mt-[5px]">
                <span className="block tracking-[1.1px]">
                  NWS LasVegas (Southern Nevada, Southeastern California, Northwestern Arizona){"}"}
                </span>
                <span className="block tracking-[0.82px]">
                  <span className="tracking-[-0.14px]">
                    ...EXCESSIVE HEAT WARNING REMAINS IN EFFECT UNTIL 8 PM PDT /8 PM MST/ MONDAY...
                  </span>
                  <span className="tracking-[-0.9px]"> * WHAT...</span>Dangerously hot conditions. High
                </span>
                <span className="block tracking-[1.14px]">
                  temperatures across the eastern Mojave Desert and Las Vegas Valley will range ...more
                </span>
              </p>
              <div className="mt-[30px] text-[28px] leading-[42px]">
                <p className="tracking-[-0.18px]">Starts at: Sat, Jul 10 11:58 AM</p>
                <p className="tracking-[0.1px]">Ends at: Tue, Jul 13 5:00 AM</p>
              </div>
            </div>
          </section>
          <section className="relative mt-[122px] h-[500px] w-full overflow-hidden leading-normal font-normal">
            <MapCanvas />
            <ZoomControl />
            <Marker />
            <Popup />
            <div className="absolute right-0 bottom-0 flex h-[32px] w-[284px] items-center justify-center gap-[7px] bg-white/75 font-['Liberation_Sans',sans-serif] text-[22px] tracking-[-0.1px] text-[#333]">
              <a className="text-[#0078a8]">Leaflet</a>
              <span>|</span>
              <span>Mahmoud Farargy</span>
            </div>
          </section>
        </main>
      </div>
      <div className="absolute bottom-0 left-1/2 h-[2px] w-[1160px] -translate-x-1/2 rounded-t-full bg-[#8a94a8]" />
    </div>
  );
}
